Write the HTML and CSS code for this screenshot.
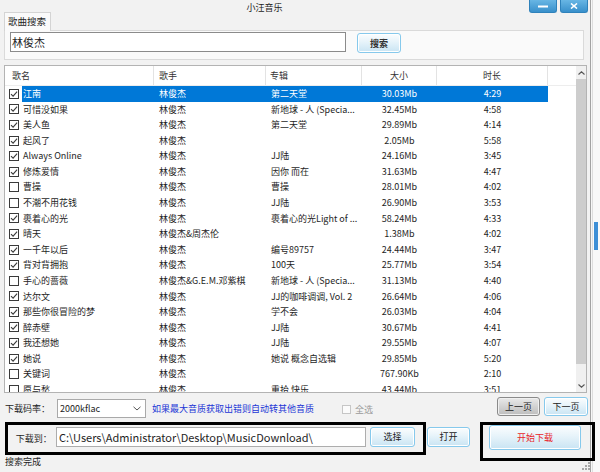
FILE: index.html
```html
<!DOCTYPE html>
<html lang="zh">
<head>
<meta charset="utf-8">
<title>小汪音乐</title>
<link rel="stylesheet" href="styles.css">
</head>
<body>
<svg class="defs" width="0" height="0">
  <symbol id="cbon" viewBox="0 0 10 10"><rect x="0.5" y="0.5" width="9" height="9" fill="#fff" stroke="#3a3a3a"/><path d="M2 5.1 L4.1 7.2 L8.1 2.7" fill="none" stroke="#3a3a3a" stroke-width="1.1"/></symbol>
  <symbol id="cboff" viewBox="0 0 10 10"><rect x="0.5" y="0.5" width="9" height="9" fill="#fff" stroke="#3a3a3a"/></symbol>
</svg>
<div class="window">
  <div class="titlebar">
    <div class="title">小汪音乐</div>
    <div class="wbtns">
      <div class="wbtn"><svg width="10" height="3" viewBox="0 0 10 3"><rect x="0" y="0.5" width="10" height="2" fill="#fff"/></svg></div>
      <div class="wbtn"><svg width="8" height="6" viewBox="0 0 8 6"><path d="M1 0.5 L7 5.5 M7 0.5 L1 5.5" stroke="#fff" stroke-width="1.6"/></svg></div>
    </div>
  </div>
  <div class="tabs"><div class="tab">歌曲搜索</div></div>
  <div class="panel">
    <div class="input search-input">林俊杰</div>
    <div class="btn search-btn">搜索</div>
  </div>
  <div class="list">
    <div class="content">
      <div class="head">
        <span class="h1">歌名</span><span class="h2">歌手</span><span class="h3">专辑</span><span class="h4">大小</span><span class="h5">时长</span><span class="h6"></span>
      </div>
      <div class="rows">
        <div class="row sel"><span class="c0"><svg class="cb"><use href="#cbon"/></svg></span><span class="c1">江南</span><span class="c2">林俊杰</span><span class="c3">第二天堂</span><span class="c4">30.03Mb</span><span class="c5">4:29</span></div>
        <div class="row"><span class="c0"><svg class="cb"><use href="#cbon"/></svg></span><span class="c1">可惜没如果</span><span class="c2">林俊杰</span><span class="c3">新地球 - 人 (Specia...</span><span class="c4">32.45Mb</span><span class="c5">4:58</span></div>
        <div class="row"><span class="c0"><svg class="cb"><use href="#cbon"/></svg></span><span class="c1">美人鱼</span><span class="c2">林俊杰</span><span class="c3">第二天堂</span><span class="c4">29.89Mb</span><span class="c5">4:14</span></div>
        <div class="row"><span class="c0"><svg class="cb"><use href="#cbon"/></svg></span><span class="c1">起风了</span><span class="c2">林俊杰</span><span class="c3"></span><span class="c4">2.05Mb</span><span class="c5">5:58</span></div>
        <div class="row"><span class="c0"><svg class="cb"><use href="#cbon"/></svg></span><span class="c1">Always Online</span><span class="c2">林俊杰</span><span class="c3">JJ陆</span><span class="c4">24.16Mb</span><span class="c5">3:45</span></div>
        <div class="row"><span class="c0"><svg class="cb"><use href="#cbon"/></svg></span><span class="c1">修炼爱情</span><span class="c2">林俊杰</span><span class="c3">因你 而在</span><span class="c4">31.63Mb</span><span class="c5">4:47</span></div>
        <div class="row"><span class="c0"><svg class="cb"><use href="#cboff"/></svg></span><span class="c1">曹操</span><span class="c2">林俊杰</span><span class="c3">曹操</span><span class="c4">28.01Mb</span><span class="c5">4:02</span></div>
        <div class="row"><span class="c0"><svg class="cb"><use href="#cboff"/></svg></span><span class="c1">不潮不用花钱</span><span class="c2">林俊杰</span><span class="c3">JJ陆</span><span class="c4">26.90Mb</span><span class="c5">3:53</span></div>
        <div class="row"><span class="c0"><svg class="cb"><use href="#cbon"/></svg></span><span class="c1">裹着心的光</span><span class="c2">林俊杰</span><span class="c3">裹着心的光Light of ...</span><span class="c4">58.24Mb</span><span class="c5">4:33</span></div>
        <div class="row"><span class="c0"><svg class="cb"><use href="#cbon"/></svg></span><span class="c1">晴天</span><span class="c2">林俊杰&amp;周杰伦</span><span class="c3"></span><span class="c4">1.38Mb</span><span class="c5">4:02</span></div>
        <div class="row"><span class="c0"><svg class="cb"><use href="#cbon"/></svg></span><span class="c1">一千年以后</span><span class="c2">林俊杰</span><span class="c3">编号89757</span><span class="c4">24.44Mb</span><span class="c5">3:47</span></div>
        <div class="row"><span class="c0"><svg class="cb"><use href="#cbon"/></svg></span><span class="c1">背对背拥抱</span><span class="c2">林俊杰</span><span class="c3">100天</span><span class="c4">25.77Mb</span><span class="c5">3:54</span></div>
        <div class="row"><span class="c0"><svg class="cb"><use href="#cboff"/></svg></span><span class="c1">手心的蔷薇</span><span class="c2">林俊杰&amp;G.E.M.邓紫棋</span><span class="c3">新地球 - 人 (Specia...</span><span class="c4">31.13Mb</span><span class="c5">4:40</span></div>
        <div class="row"><span class="c0"><svg class="cb"><use href="#cbon"/></svg></span><span class="c1">达尔文</span><span class="c2">林俊杰</span><span class="c3">JJ的咖啡调调, Vol. 2</span><span class="c4">26.64Mb</span><span class="c5">4:06</span></div>
        <div class="row"><span class="c0"><svg class="cb"><use href="#cbon"/></svg></span><span class="c1">那些你很冒险的梦</span><span class="c2">林俊杰</span><span class="c3">学不会</span><span class="c4">26.03Mb</span><span class="c5">4:04</span></div>
        <div class="row"><span class="c0"><svg class="cb"><use href="#cbon"/></svg></span><span class="c1">醉赤壁</span><span class="c2">林俊杰</span><span class="c3">JJ陆</span><span class="c4">30.67Mb</span><span class="c5">4:41</span></div>
        <div class="row"><span class="c0"><svg class="cb"><use href="#cbon"/></svg></span><span class="c1">我还想她</span><span class="c2">林俊杰</span><span class="c3">JJ陆</span><span class="c4">29.55Mb</span><span class="c5">4:07</span></div>
        <div class="row"><span class="c0"><svg class="cb"><use href="#cbon"/></svg></span><span class="c1">她说</span><span class="c2">林俊杰</span><span class="c3">她说 概念自选辑</span><span class="c4">29.85Mb</span><span class="c5">5:20</span></div>
        <div class="row"><span class="c0"><svg class="cb"><use href="#cboff"/></svg></span><span class="c1">关键词</span><span class="c2">林俊杰</span><span class="c3"></span><span class="c4">767.90Kb</span><span class="c5">2:10</span></div>
        <div class="row"><span class="c0"><svg class="cb"><use href="#cboff"/></svg></span><span class="c1">愿与愁</span><span class="c2">林俊杰</span><span class="c3">重拾 快乐</span><span class="c4">43.44Mb</span><span class="c5">3:51</span></div>
      </div>
    </div>
    <div class="scroll">
      <div class="arrow"><svg width="7" height="4" viewBox="0 0 7 4"><path d="M0.5 3.5 L3.5 0.8 L6.5 3.5" fill="none" stroke="#555" stroke-width="1.1"/></svg></div>
      <div class="thumb"></div>
      <div class="track"></div>
      <div class="arrow"><svg width="7" height="4" viewBox="0 0 7 4"><path d="M0.5 0.5 L3.5 3.2 L6.5 0.5" fill="none" stroke="#555" stroke-width="1.1"/></svg></div>
    </div>
  </div>
  <div class="rowa">
    <span class="lbl">下载码率：</span>
    <div class="combo"><span>2000kflac</span><svg width="8" height="5" viewBox="0 0 8 5"><path d="M0.5 0.8 L4 4 L7.5 0.8" fill="none" stroke="#555" stroke-width="1"/></svg></div>
    <span class="hint">如果最大音质获取出错则自动转其他音质</span>
    <span class="allsel"><span class="dcb"></span><span class="dtxt">全选</span></span>
    <div class="pager">
      <div class="btn gray">上一页</div>
      <div class="btn pbtn">下一页</div>
    </div>
  </div>
  <div class="rowb">
    <div class="box box1">
      <span class="lbl2">下载到：</span>
      <div class="input path-input">C:\Users\Administrator\Desktop\MusicDownload\</div>
      <div class="btn choose">选择</div>
    </div>
    <div class="btn open">打开</div>
    <div class="box box2">
      <div class="btn start">开始下载</div>
    </div>
  </div>
  <div class="status">
    <span>搜索完成</span>
    <svg class="grip" width="8" height="8" viewBox="0 0 8 8"><g fill="#a8a8a8"><rect x="6" y="0" width="2" height="2"/><rect x="3" y="3" width="2" height="2"/><rect x="6" y="3" width="2" height="2"/><rect x="0" y="6" width="2" height="2"/><rect x="3" y="6" width="2" height="2"/><rect x="6" y="6" width="2" height="2"/></g></svg>
  </div>
</div>
<div class="desk"></div>
</body>
</html>
```
FILE: styles.css
```css
* { box-sizing: border-box; }
html, body { margin: 0; padding: 0; }
body {
  width: 600px; height: 472px; overflow: hidden;
  display: flex;
  background: #f7f7f7;
  font-family: "Noto Sans CJK SC", "Noto Sans", sans-serif;
  font-size: 9px;
  color: #1e1e1e;
}
.defs { position: absolute; width: 0; height: 0; }
.window {
  position: relative; z-index: 1;
  width: 591px; height: 472px; flex: none;
  background: #f2f2f2;
  border-right: 1px solid #a3a3a3;
  display: flex; flex-direction: column;
}
.desk {
  flex: 1;
  margin-left: 1px;
  border-left: 1px solid #dedede;
  background: linear-gradient(#3e8fd6, #3e8fd6) 1px 222px / 4px 28px no-repeat, #f9f9f9;
}
.titlebar { height: 13px; display: flex; flex: none; }
.title { flex: 1; text-align: center; padding-top: 2px; line-height: 12px; color: #222; }
.wbtns { display: flex; gap: 3px; margin-right: 2px; }
.wbtn {
  width: 28px; height: 13px;
  background: linear-gradient(#68b6e4, #3990cb);
  border: 1px solid #2f82bb; border-top: none;
  border-radius: 0 0 3px 3px;
  display: flex; align-items: center; justify-content: center;
}
.tabs { height: 19px; margin-top: -1px; padding-left: 4px; display: flex; flex: none; }
.tab {
  position: relative; z-index: 1;
  width: 47px; height: 19px;
  border: 1px solid #d4d4d4; border-bottom: none;
  background: #fafafa;
  padding-left: 3px; line-height: 17px; font-size: 9.5px;
}
.panel {
  margin: -1px 0 0 4px; width: 580px; height: 30px; flex: none;
  border: 1px solid #dadada; background: #fafafa;
  display: flex; align-items: flex-start; padding: 1px 0 0 5px;
}
.input {
  background: #fff; border: 1px solid #8b8b8b;
  font-size: 11px; line-height: 18px; padding-left: 1px;
  white-space: nowrap; overflow: hidden;
}
.search-input { width: 336px; height: 20px; }
.btn {
  display: flex; align-items: center; justify-content: center;
  border: 1px solid #86c9ec; border-radius: 3px;
  background: linear-gradient(#fbfdfe, #e6f3fa 45%, #c9e4f3);
  box-shadow: inset 0 0 0 1px #ffffff;
  color: #222; font-size: 9px; flex: none;
}
.search-btn { width: 44px; height: 20px; margin: 1px 0 0 11px; font-weight: bold; color: #333; }
.list {
  margin: 5px 0 0 4px; width: 583px; height: 328px; flex: none;
  border: 1px solid #b3b3b3; background: #fff;
  display: flex;
}
.content { flex: 1; display: flex; flex-direction: column; overflow: hidden; }
.head { height: 20px; display: flex; flex: none; border-bottom: 1px solid #ededed; line-height: 19px; color: #333; }
.head span { border-right: 1px solid #e3e3e3; flex: none; }
.h1 { width: 149px; padding-left: 7px; }
.h2 { width: 112px; padding-left: 5px; }
.h3 { width: 96px; padding-left: 4px; }
.h4 { width: 75px; text-align: center; }
.h5 { width: 111px; text-align: center; }
.head .h6 { flex: 1; border-right: none; }
.rows { flex: 1; overflow: hidden; }
.row { height: 15.58px; line-height: 15.58px; display: flex; align-items: center; white-space: nowrap; }
.row span { overflow: hidden; flex: none; height: 15.58px; }
.c0 { width: 17px; display: flex; align-items: center; }
.cb { width: 10px; height: 10px; margin-left: 4px; }
.c1 { width: 132px; padding-left: 1px; }
.c2 { width: 112px; padding-left: 5px; }
.c3 { width: 96px; padding-left: 5px; }
.c4 { width: 75px; text-align: center; }
.c5 { width: 111px; text-align: center; }
.sel .c1, .sel .c2, .sel .c3, .sel .c4, .sel .c5 { background: #0078d7; color: #fff; }
.scroll { width: 10px; flex: none; display: flex; flex-direction: column; background: #f0f0f0; }
.arrow { height: 13px; display: flex; align-items: center; justify-content: center; flex: none; }
.thumb { height: 285px; background: #cdcdcd; flex: none; }
.track { flex: 1; }
.rowa {
  margin-top: 4px; height: 22px; flex: none;
  display: flex; align-items: center; padding: 0 2px 0 5px;
}
.lbl { width: 52px; flex: none; }
.combo {
  width: 89px; height: 19px; flex: none;
  border: 1px solid #a9a9a9; background: #fff;
  display: flex; align-items: center; justify-content: space-between;
  padding: 0 4px 0 2px;
}
.hint { width: 190px; flex: none; margin-left: 6px; color: #2236d6; white-space: nowrap; }
.allsel { display: flex; align-items: center; gap: 4px; margin-top: 3px; }
.dcb { width: 9px; height: 9px; border: 1px solid #c6c6c6; background: #fbfbfb; }
.dtxt { color: #9a9a9a; }
.pager { margin-left: auto; display: flex; gap: 4px; align-self: flex-start; }
.pager .btn { height: 19px; }
.gray {
  width: 43px;
  border-color: #8a8a8a;
  background: linear-gradient(#e9e9e9, #d2d2d2 50%, #bdbdbd);
  box-shadow: inset 0 0 0 1px #f0f0f0;
}
.pbtn { width: 44px; }
.rowb { margin-top: 3px; height: 33px; flex: none; display: flex; align-items: flex-start; }
.box { border: 3px solid #000; flex: none; display: flex; align-items: flex-start; }
.box1 { margin-left: 5px; width: 421px; height: 33px; padding-left: 7.7px; }
.lbl2 { width: 40.3px; flex: none; align-self: center; }
.path-input { width: 310px; height: 20px; margin-top: 1.7px; border-color: #adadad; padding-left: 2px; }
.choose { width: 45px; height: 20px; margin: 1.7px 0 0 4px; }
.open { width: 43px; height: 20px; margin: 4.7px 0 0 1px; }
.box2 { margin-left: 10px; width: 115px; height: 38.6px; padding-left: 6px; }
.start { width: 92px; height: 25px; color: #e8262b; }
.status { flex: 1; display: flex; align-items: flex-start; padding-left: 5px; line-height: 14px; }
.grip { margin: 7px 0 0 auto; }
```
